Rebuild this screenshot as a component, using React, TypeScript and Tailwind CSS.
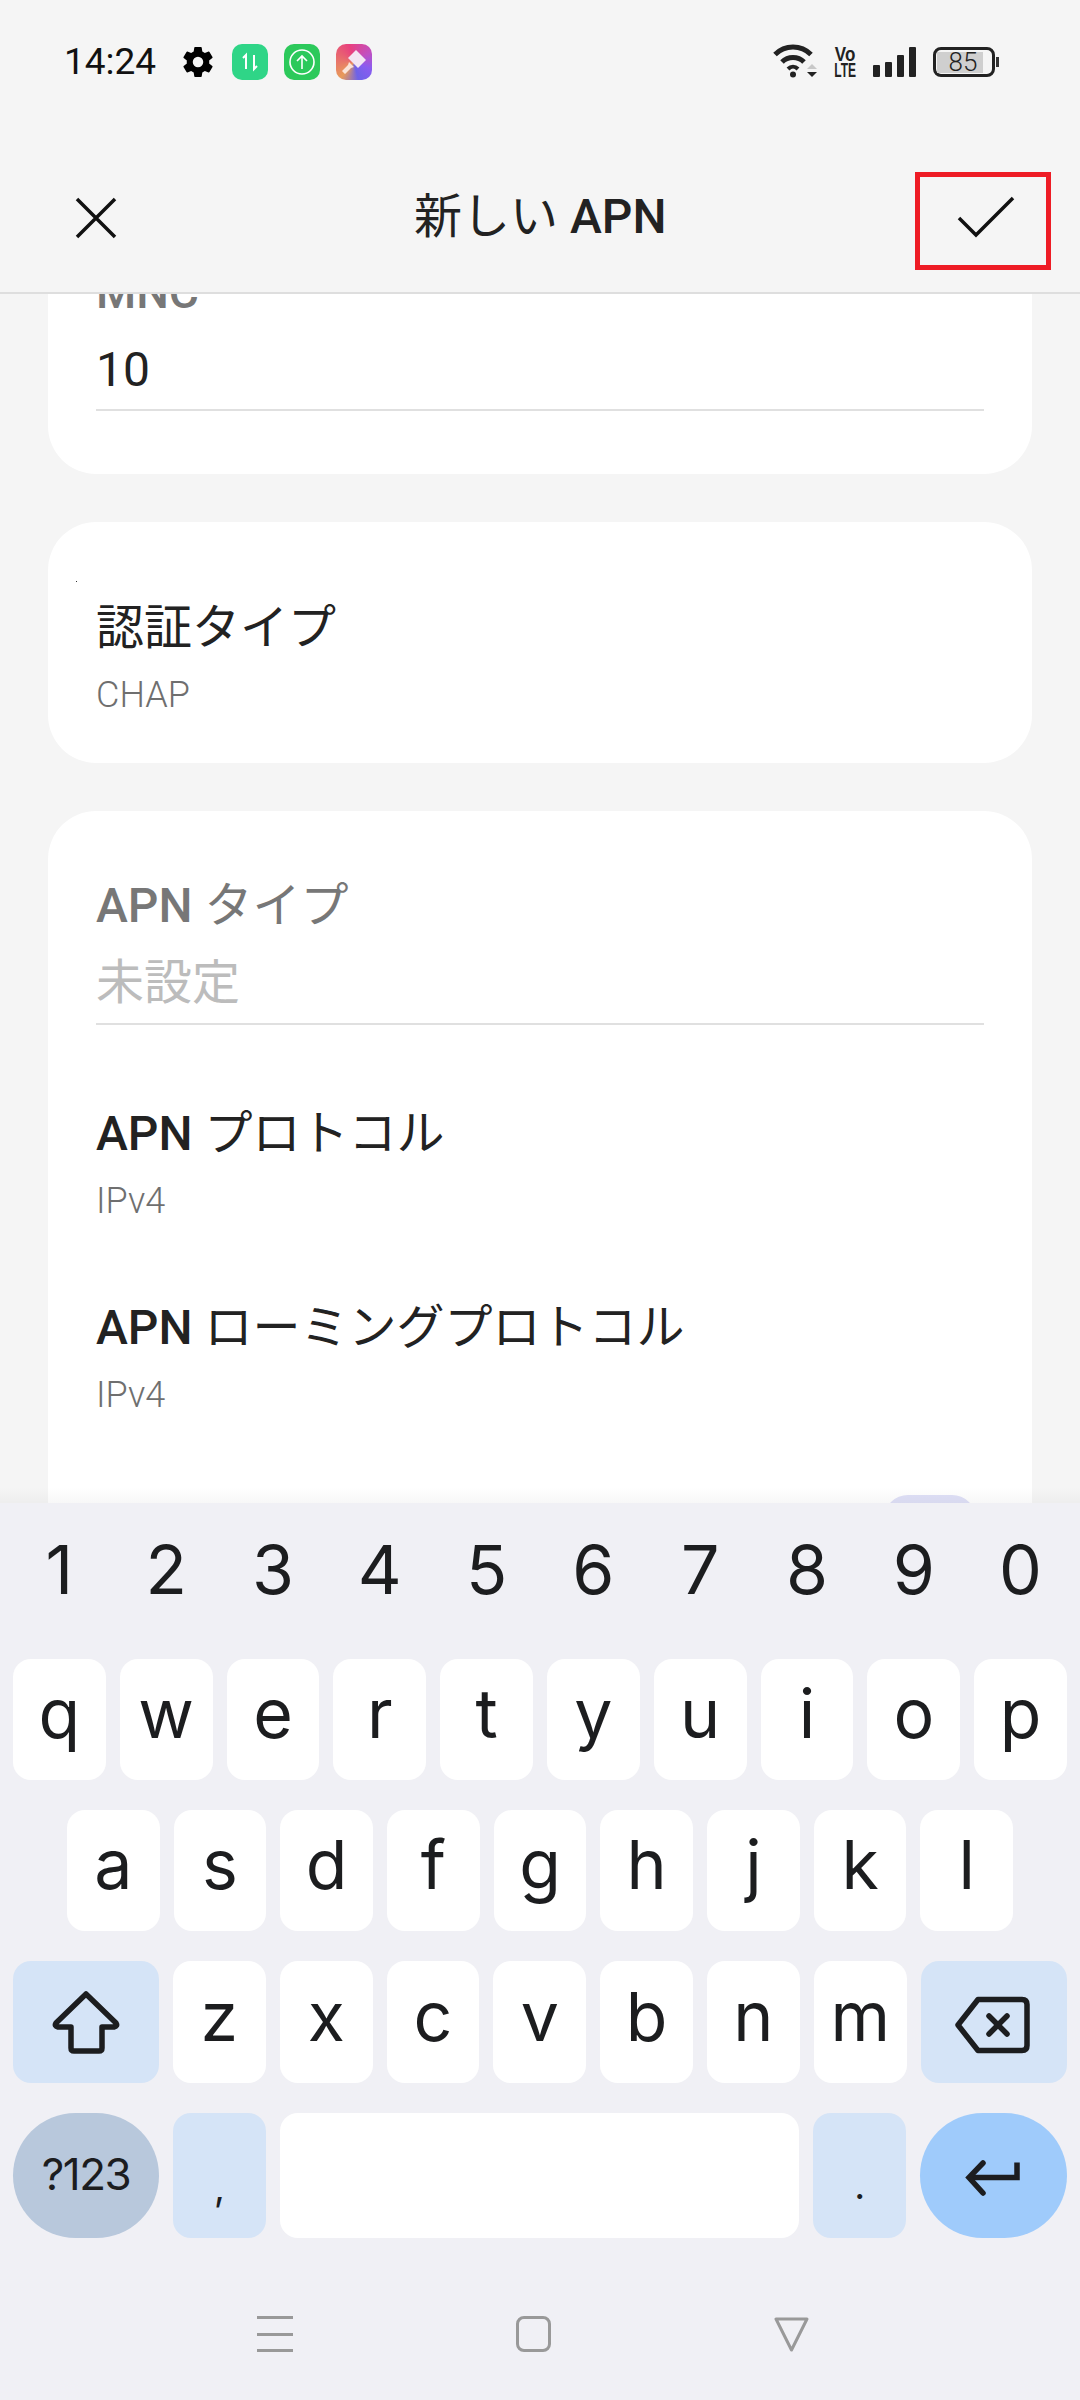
import React from "react";

const sans = "font-['Roboto','Noto_Sans_CJK_JP',sans-serif]";
const kb = "font-['Inter','Roboto',sans-serif]";

function Gear() {
  return (
    <svg width="36" height="36" viewBox="0 0 24 24" className="ml-[24px]">
      <path
        fill="#000"
        fillRule="evenodd"
        d="M19.43 12.98c.04-.32.07-.64.07-.98s-.03-.66-.07-.98l2.11-1.65a.5.5 0 0 0 .12-.64l-2-3.46a.5.5 0 0 0-.61-.22l-2.49 1a7.3 7.3 0 0 0-1.69-.98l-.38-2.65A.49.49 0 0 0 14 2h-4a.49.49 0 0 0-.49.42l-.38 2.65c-.61.25-1.17.59-1.69.98l-2.49-1a.49.49 0 0 0-.61.22l-2 3.46a.49.49 0 0 0 .12.64l2.11 1.65c-.04.32-.07.65-.07.98s.03.66.07.98l-2.11 1.65a.5.5 0 0 0-.12.64l2 3.46c.12.22.39.3.61.22l2.49-1c.52.4 1.08.73 1.69.98l.38 2.65c.03.24.24.42.49.42h4c.25 0 .46-.18.49-.42l.38-2.65c.61-.25 1.17-.59 1.69-.98l2.49 1c.23.09.49 0 .61-.22l2-3.46a.5.5 0 0 0-.12-.64zM12 15.500a3.500 3.500 0 1 1 0-7 3.500 3.500 0 0 1 0 7z"
      />
    </svg>
  );
}

function StatusBar() {
  return (
    <div className="h-[124px] flex items-start justify-between pl-[64px] pr-[81px] pt-[44px]">
      <div className="flex items-center h-[36px]">
        <span className={`${sans} text-[37px] leading-[36px] text-[#111] w-[92px] whitespace-nowrap`}>14:24</span>
        <Gear />
        <div className="ml-[16px] w-[36px] h-[36px] rounded-[10px] bg-[#2fd587] flex items-center justify-center">
          <svg width="24" height="24" viewBox="0 0 24 24" fill="none" stroke="#fff" strokeWidth="2">
            <path d="M5 8l3-3v14" />
            <path d="M16 5v14l3-3" />
          </svg>
        </div>
        <div className="ml-[16px] w-[36px] h-[36px] rounded-[10px] bg-[#2cc95b] flex items-center justify-center">
          <svg width="30" height="30" viewBox="0 0 30 30" fill="none" stroke="#fff" strokeWidth="1.600">
            <circle cx="15" cy="15" r="12" />
            <path d="M15 22V9M10 14l5-5 5 5" />
          </svg>
        </div>
        <div className="ml-[16px] w-[36px] h-[36px] rounded-[10px] bg-[conic-gradient(from_220deg,#e89a5a,#e8407f_35%,#c24fc0_55%,#8a5cf0_70%,#6d62e8_85%,#e89a5a)] flex items-center justify-center">
          <svg width="32" height="32" viewBox="0 0 32 32">
            <path d="M18 4l10 10-8 8L10 12z" fill="#f3e6f4" />
            <path d="M11 16l5 5-3 1-6 6-3-3 6-6z" fill="#fbe3d8" />
          </svg>
        </div>
      </div>
      <div className="flex items-center h-[36px]">
        <svg width="46" height="36" viewBox="0 0 46 36">
          <path d="M4 10.500C14 .5 30 .5 40 10.500" fill="none" stroke="#222" strokeWidth="5" />
          <path d="M11 18C17 12 27 12 33 18" fill="none" stroke="#222" strokeWidth="5" />
          <path d="M17 25c3-3 7-3 10 0" fill="none" stroke="#222" strokeWidth="4" />
          <circle cx="22" cy="30.500" r="3" fill="#222" />
          <path d="M36 25l5-5 5 5z" fill="#c8c8c8" />
          <path d="M36 28h10l-5 5z" fill="#222" />
        </svg>
        <div className="ml-[17px] w-[22px] flex flex-col items-center font-['Liberation_Sans',sans-serif] font-bold text-[#222] whitespace-nowrap">
          <span className="text-[20px] leading-[15px] scale-x-[0.85]">Vo</span>
          <span className="text-[20px] leading-[16px] scale-x-[0.6]">LTE</span>
        </div>
        <div className="ml-[17px] flex items-end gap-[5px] h-[30px]">
          <div className="w-[7px] h-[12px] bg-[#222] rounded-[1px]" />
          <div className="w-[7px] h-[15px] bg-[#222] rounded-[1px]" />
          <div className="w-[7px] h-[22px] bg-[#222] rounded-[1px]" />
          <div className="w-[7px] h-[30px] bg-[#222] rounded-[1px]" />
        </div>
        <div className="ml-[17px] w-[62px] h-[30px] border-[3px] border-[#222] rounded-[8px] flex items-center pl-[1px]">
          <div className={`${sans} w-[46px] h-[21px] bg-[#cfcfcf] text-[26px] leading-[21px] text-center pl-[6px] text-[#222] font-light`}>85</div>
        </div>
        <div className="ml-[1px] w-[3px] h-[10px] bg-[#333]" />
      </div>
    </div>
  );
}

function Header() {
  return (
    <div className="relative h-[170px] border-b-2 border-[#dedede] flex items-start justify-between pl-[74px] pr-[65px] pt-[72px]">
      <svg width="44" height="44" viewBox="0 0 44 44" fill="none" stroke="#111" strokeWidth="3.500">
        <path d="M3 3l38 38M41 3L3 41" />
      </svg>
      <div className={`${sans} absolute left-[414px] top-[55px] text-[48px] leading-[76px] text-[#222] whitespace-nowrap`}>
        新しい <span className="font-medium">APN</span>
      </div>
      <svg width="58" height="42" viewBox="0 0 58 42" fill="none" stroke="#111" strokeWidth="3.500">
        <path d="M2 22l17 17L56 2" />
      </svg>
      <div className="absolute left-[915px] top-[48px] w-[136px] h-[98px] border-[5px] border-[#ee1c25]" />
    </div>
  );
}

function Sub({ children }: { children: React.ReactNode }) {
  return <div className="mt-[15px] text-[36px] leading-[44px] font-light text-[#6f6f6f]">{children}</div>;
}

function Content() {
  return (
    <div className={`${sans} relative flex-1 overflow-hidden min-h-0 px-[48px] bg-[#f5f5f5]`}>
      <div className="flex flex-col gap-[48px] -mt-[32px]">
        <section className="bg-white rounded-b-[48px] px-[48px] pb-[63px]">
          <div className="text-[46px] leading-[60px] font-medium text-[#777]">MNC</div>
          <div className="mt-[18px] text-[48px] leading-[60px] text-[#222] pb-[9px] border-b-2 border-[#e0e0e0]">10</div>
        </section>
        <section className="bg-white rounded-[48px] px-[48px] pt-[76px] pb-[46px]">
          <div className="text-[48px] leading-[60px] text-[#222]">認証タイプ</div>
          <div className="mt-[15px] text-[36px] leading-[44px] font-light text-[#6f6f6f]">CHAP</div>
        </section>
        <section className="bg-white rounded-t-[48px] px-[48px] pt-[65px] pb-[60px]">
          <div className="text-[48px] leading-[60px] text-[#777]">
            <span className="font-medium">APN</span> タイプ
          </div>
          <div className="mt-[17px] text-[48px] leading-[60px] text-[#bcbcbc] pb-[10px] border-b-2 border-[#e0e0e0]">未設定</div>
          <div className="mt-[79px] text-[48px] leading-[60px] text-[#222]">
            <span className="font-medium">APN</span> プロトコル
          </div>
          <Sub>IPv4</Sub>
          <div className="mt-[75px] text-[48px] leading-[60px] text-[#222]">
            <span className="font-medium">APN</span> ローミングプロトコル
          </div>
          <Sub>IPv4</Sub>
          <div className="mt-[78px] flex justify-end pr-[8px]">
            <div className="w-[92px] h-[48px] rounded-full bg-[#dfe0f7]" />
          </div>
        </section>
      </div>
      <div className="absolute left-[76px] top-[287px] w-[1px] h-[1px] bg-[#333]" />
      <div className="absolute left-0 right-0 bottom-0 h-[16px] bg-gradient-to-b from-transparent to-[#00000008]" />
    </div>
  );
}

function Key({ children, className = "" }: { children?: React.ReactNode; className?: string }) {
  return (
    <div className={`flex items-center justify-center rounded-[18px] bg-white text-[#1c1d1f] ${className}`}>
      {children}
    </div>
  );
}

function LetterRow({ letters, className = "" }: { letters: string; className?: string }) {
  return (
    <div className={`flex gap-[14px] h-[121px] ${className}`}>
      {letters.split("").map((l) => (
        <Key key={l} className="flex-1 min-w-0 text-[68px] leading-[109px] pb-[12px]">
          {l}
        </Key>
      ))}
    </div>
  );
}

function Keyboard() {
  const smallKey = "w-[92.800px] shrink-0 text-[68px] leading-[110px] pb-[12px]";
  return (
    <div className={`${kb} h-[897px] bg-[#f0f0f5] px-[13px] flex flex-col`}>
      <div className="flex gap-[14px] h-[156px] items-start pt-[24px] text-[#1c1d1f]">
        {"1234567890".split("").map((d) => (
          <div key={d} className="flex-1 min-w-0 text-center text-[68px] leading-[84px]">
            {d}
          </div>
        ))}
      </div>
      <LetterRow letters="qwertyuiop" />
      <LetterRow letters="asdfghjkl" className="mt-[30px] px-[54px]" />
      <div className="flex gap-[14px] h-[122px] mt-[30px]">
        <Key className="w-[146px] shrink-0 !bg-[#d5e4f7]">
          <svg width="72" height="68" viewBox="0 0 72 68" fill="none" stroke="#1c1d1f" strokeWidth="5.500" strokeLinejoin="round" className="overflow-visible">
            <path d="M36 6L6 35q-2 3 2 4h13v21q0 3 3 3h25q3 0 3-3V39h12q4-1 2-4z" />
          </svg>
        </Key>
        {"zxcvbnm".split("").map((l) => (
          <Key key={l} className={smallKey}>
            {l}
          </Key>
        ))}
        <Key className="flex-1 !bg-[#d5e4f7]">
          <svg width="78" height="62" viewBox="0 0 78 62" fill="none" stroke="#1c1d1f" strokeWidth="5.500" strokeLinejoin="round" className="overflow-visible">
            <path d="M23 8.500h44q5 0 5 5v41q0 5-5 5H23L3 34z" />
            <path d="M34 25l18 18M52 25L34 43" strokeWidth="5.500" strokeLinecap="round" />
          </svg>
        </Key>
      </div>
      <div className="flex gap-[14px] h-[125px] mt-[30px]">
        <Key className="w-[146px] shrink-0 !rounded-full !bg-[#b8c8dc] text-[44px] tracking-[-1.500px] pb-[3px]">?123</Key>
        <Key className="w-[92.800px] shrink-0 !bg-[#d5e4f7] text-[38px] !items-end pb-[22px]">,</Key>
        <Key className="flex-1" />
        <Key className="w-[92.800px] shrink-0 !bg-[#d5e4f7] text-[38px] !items-end pb-[24px]">.</Key>
        <Key className="w-[147px] shrink-0 !rounded-full !bg-[#9fcbfb]">
          <svg width="60" height="40" viewBox="0 0 60 40" fill="none" stroke="#1c1d1f" strokeWidth="5.500" className="overflow-visible">
            <path d="M53 6.500V21.500H5" />
            <path d="M19 7L5 21.500 19 37" strokeLinecap="round" />
          </svg>
        </Key>
      </div>
      <div className="flex-1 flex items-start justify-center pt-[78px] pr-[15px]">
        <div className="flex items-center gap-[223px]">
          <div className="w-[36px] h-[36px] flex flex-col justify-between">
            <div className="h-[3px] bg-[#999]" />
            <div className="h-[3px] bg-[#999]" />
            <div className="h-[3px] bg-[#999]" />
          </div>
          <div className="w-[35px] h-[36px] border-[3px] border-[#999] rounded-[8px]" />
          <svg width="35" height="36" viewBox="0 0 35 36" fill="none" stroke="#999" strokeWidth="3" strokeLinejoin="round">
            <path d="M2 3h31L17.500 34z" />
          </svg>
        </div>
      </div>
    </div>
  );
}

export default function App() {
  return (
    <div className="w-[1080px] h-[2400px] bg-[#f5f5f5] flex flex-col overflow-hidden">
      <StatusBar />
      <Header />
      <Content />
      <Keyboard />
    </div>
  );
}
